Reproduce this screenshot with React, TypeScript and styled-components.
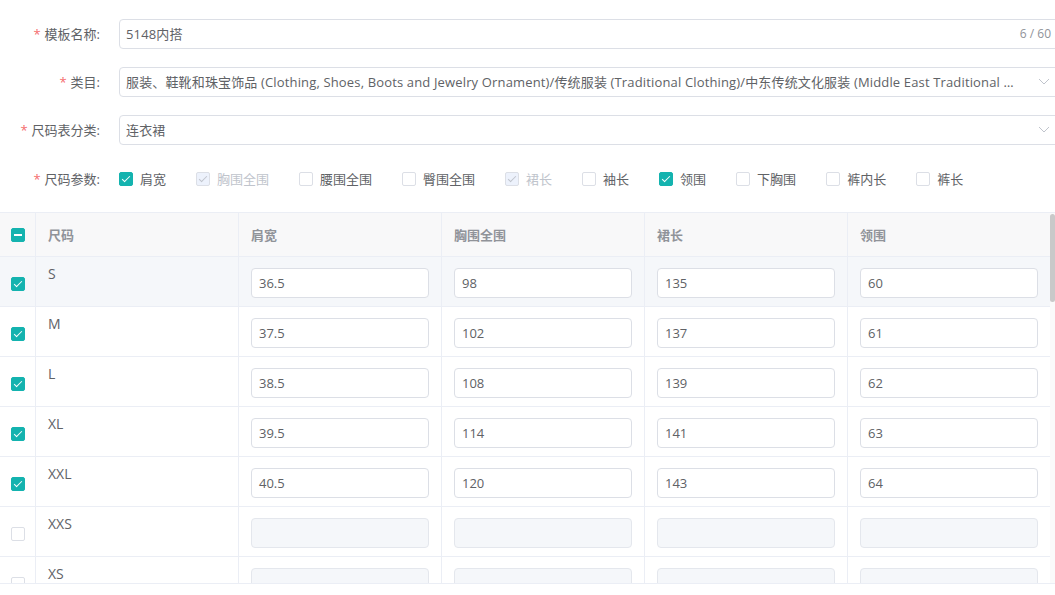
import React from "react";
import styled, { createGlobalStyle, css } from "styled-components";

const GlobalStyle = createGlobalStyle`
  html, body {
    margin: 0;
    padding: 0;
    background: #fff;
    overflow: hidden;
  }
  body {
    font-family: "Open Sans", "Noto Sans CJK SC", sans-serif;
    font-size: 13px;
    line-height: 18px;
    color: #606266;
  }
`;

const Page = styled.div`
  width: 1055px;
  height: 595px;
  overflow: hidden;
  padding-top: 19px;
  box-sizing: border-box;
`;

const Form = styled.div`
  width: 1062px;
`;

const FormItem = styled.div<{ $tall?: boolean }>`
  display: flex;
  align-items: center;
  height: ${(p) => (p.$tall ? "31px" : "30px")};
  margin-bottom: 18px;
`;

const Label = styled.label`
  width: 119px;
  flex-shrink: 0;
  box-sizing: border-box;
  padding-right: 19px;
  text-align: right;
  color: #606266;
  font-size: 13px;
  white-space: nowrap;

  &::before {
    content: "*";
    color: #f56c6c;
    margin-right: 4px;
  }
`;

const Field = styled.div<{ $select?: boolean }>`
  position: relative;
  flex: 1;
  min-width: 0;
  height: 30px;
  box-sizing: border-box;
  border: 1px solid #dcdfe6;
  border-radius: 4px;
  display: flex;
  align-items: center;
  padding: 0 ${(p) => (p.$select ? "42px" : "10px")} 0 6px;
  color: #606266;
  background: #fff;
`;

const FieldText = styled.span`
  flex: 1;
  min-width: 0;
  white-space: nowrap;
  overflow: hidden;
  text-overflow: ellipsis;
  letter-spacing: 0.15px;
`;

const Counter = styled.span`
  color: #909399;
  font-size: 12px;
  margin-left: 8px;
`;

const Chevron = styled.svg`
  position: absolute;
  right: 11px;
  top: 50%;
  margin-top: -4px;
`;

const CheckGroup = styled.div`
  display: flex;
  align-items: center;
`;

const CheckItem = styled.span<{ $disabled?: boolean }>`
  display: inline-flex;
  align-items: center;
  gap: 7px;
  margin-right: 30px;
  color: ${(p) => (p.$disabled ? "#c0c4cc" : "#606266")};
  white-space: nowrap;
`;

type BoxState = "on" | "off" | "disabledOn" | "half";

const Box = styled.span<{ $state: BoxState }>`
  position: relative;
  display: inline-block;
  width: 14px;
  height: 14px;
  box-sizing: border-box;
  border-radius: 2px;
  border: 1px solid #dcdfe6;
  background: #fff;
  flex-shrink: 0;

  ${(p) =>
    (p.$state === "on" || p.$state === "half") &&
    css`
      background: #14b3af;
      border-color: #14b3af;
    `}
  ${(p) =>
    p.$state === "disabledOn" &&
    css`
      background: #edf2fc;
      border-color: #dcdfe6;
    `}

  ${(p) =>
    (p.$state === "on" || p.$state === "disabledOn") &&
    css`
      &::after {
        content: "";
        position: absolute;
        left: 4px;
        top: 1px;
        width: 3px;
        height: 7px;
        border: 1px solid ${p.$state === "on" ? "#fff" : "#c0c4cc"};
        border-left: 0;
        border-top: 0;
        transform: rotate(45deg);
      }
    `}

  ${(p) =>
    p.$state === "half" &&
    css`
      &::after {
        content: "";
        position: absolute;
        left: 2px;
        right: 2px;
        top: 5px;
        height: 2px;
        background: #fff;
      }
    `}
`;

const TableWrap = styled.div`
  margin-top: 15px;
  display: flex;
  height: 372px;
  border-top: 1px solid #ebeef5;
  border-bottom: 1px solid #ebeef5;
  box-sizing: border-box;
  overflow: hidden;
`;

const TableBody = styled.div`
  width: 1050px;
  flex-shrink: 0;
`;

const Scrollbar = styled.div`
  flex: 1;
  background: #fafafa;
  padding-top: 1px;
`;

const Thumb = styled.div`
  height: 88px;
  background: #c9c9c9;
  border-radius: 3px;
`;

const Row = styled.div<{ $head?: boolean; $hover?: boolean }>`
  display: grid;
  grid-template-columns: 36px repeat(4, 203px) 1fr;
  height: ${(p) => (p.$head ? "44px" : "50px")};
  border-bottom: 1px solid #ebeef5;
  box-sizing: border-box;
  background: ${(p) => (p.$head ? "#f8f8f9" : p.$hover ? "#f5f7fa" : "#fff")};
`;

const Cell = styled.div<{ $head?: boolean; $top?: boolean; $check?: boolean }>`
  border-right: 1px solid #ebeef5;
  display: flex;
  align-items: ${(p) => (p.$top ? "flex-start" : "center")};
  justify-content: ${(p) => (p.$check ? "center" : "flex-start")};
  padding: ${(p) => (p.$check ? "0" : p.$top ? "8px 12px 0" : "0 12px")};
  ${(p) => p.$check && !p.$head && "padding-top: 4px;"}
  color: ${(p) => (p.$head ? "#909399" : "#606266")};
  font-weight: ${(p) => (p.$head ? 600 : 400)};
  font-size: ${(p) => (p.$top ? "14px" : "13px")};
  min-width: 0;
  &:last-child {
    border-right: 0;
  }
`;

const CellInput = styled.div<{ $disabled?: boolean }>`
  width: 100%;
  height: 30px;
  margin-top: 2px;
  box-sizing: border-box;
  border: 1px solid ${(p) => (p.$disabled ? "#e4e7ed" : "#dcdfe6")};
  background: ${(p) => (p.$disabled ? "#f5f7fa" : "#fff")};
  border-radius: 4px;
  padding: 0 7px;
  display: flex;
  align-items: center;
  color: #606266;
`;

const params: { name: string; state: BoxState }[] = [
  { name: "肩宽", state: "on" },
  { name: "胸围全围", state: "disabledOn" },
  { name: "腰围全围", state: "off" },
  { name: "臀围全围", state: "off" },
  { name: "裙长", state: "disabledOn" },
  { name: "袖长", state: "off" },
  { name: "领围", state: "on" },
  { name: "下胸围", state: "off" },
  { name: "裤内长", state: "off" },
  { name: "裤长", state: "off" },
];

const columns = ["肩宽", "胸围全围", "裙长", "领围"];

const sizes: { size: string; values: string[] }[] = [
  { size: "S", values: ["36.5", "98", "135", "60"] },
  { size: "M", values: ["37.5", "102", "137", "61"] },
  { size: "L", values: ["38.5", "108", "139", "62"] },
  { size: "XL", values: ["39.5", "114", "141", "63"] },
  { size: "XXL", values: ["40.5", "120", "143", "64"] },
  { size: "XXS", values: [] },
  { size: "XS", values: [] },
];

const ChevronDown = () => (
  <Chevron width="12" height="7" viewBox="0 0 12 7" fill="none">
    <path d="M1 1l5 5 5-5" stroke="#c0c4cc" strokeWidth="1" />
  </Chevron>
);

const App = () => {
  return (
    <Page>
      <GlobalStyle />
      <Form>
        <FormItem>
          <Label>模板名称:</Label>
          <Field>
            <FieldText>5148内搭</FieldText>
            <Counter>6 / 60</Counter>
          </Field>
        </FormItem>
        <FormItem>
          <Label>类目:</Label>
          <Field $select>
            <FieldText>
              服装、鞋靴和珠宝饰品 (Clothing, Shoes, Boots and Jewelry Ornament)/传统服装 (Traditional
              Clothing)/中东传统文化服装 (Middle East Traditional Clothing)
            </FieldText>
            <ChevronDown />
          </Field>
        </FormItem>
        <FormItem>
          <Label>尺码表分类:</Label>
          <Field $select>
            <FieldText>连衣裙</FieldText>
            <ChevronDown />
          </Field>
        </FormItem>
        <FormItem $tall>
          <Label>尺码参数:</Label>
          <CheckGroup>
            {params.map((p) => (
              <CheckItem key={p.name} $disabled={p.state === "disabledOn"}>
                <Box $state={p.state} />
                {p.name}
              </CheckItem>
            ))}
          </CheckGroup>
        </FormItem>
      </Form>

      <TableWrap>
        <TableBody>
          <Row $head>
            <Cell $head $check>
              <Box $state="half" />
            </Cell>
            <Cell $head>尺码</Cell>
            {columns.map((c) => (
              <Cell $head key={c}>
                {c}
              </Cell>
            ))}
          </Row>
          {sizes.map((s, i) => {
            const active = s.values.length > 0;
            return (
              <Row key={s.size} $hover={i === 0}>
                <Cell $check>
                  <Box $state={active ? "on" : "off"} />
                </Cell>
                <Cell $top>{s.size}</Cell>
                {columns.map((c, j) => (
                  <Cell key={c}>
                    <CellInput $disabled={!active}>{s.values[j] ?? ""}</CellInput>
                  </Cell>
                ))}
              </Row>
            );
          })}
        </TableBody>
        <Scrollbar>
          <Thumb />
        </Scrollbar>
      </TableWrap>
    </Page>
  );
};

export default App;
